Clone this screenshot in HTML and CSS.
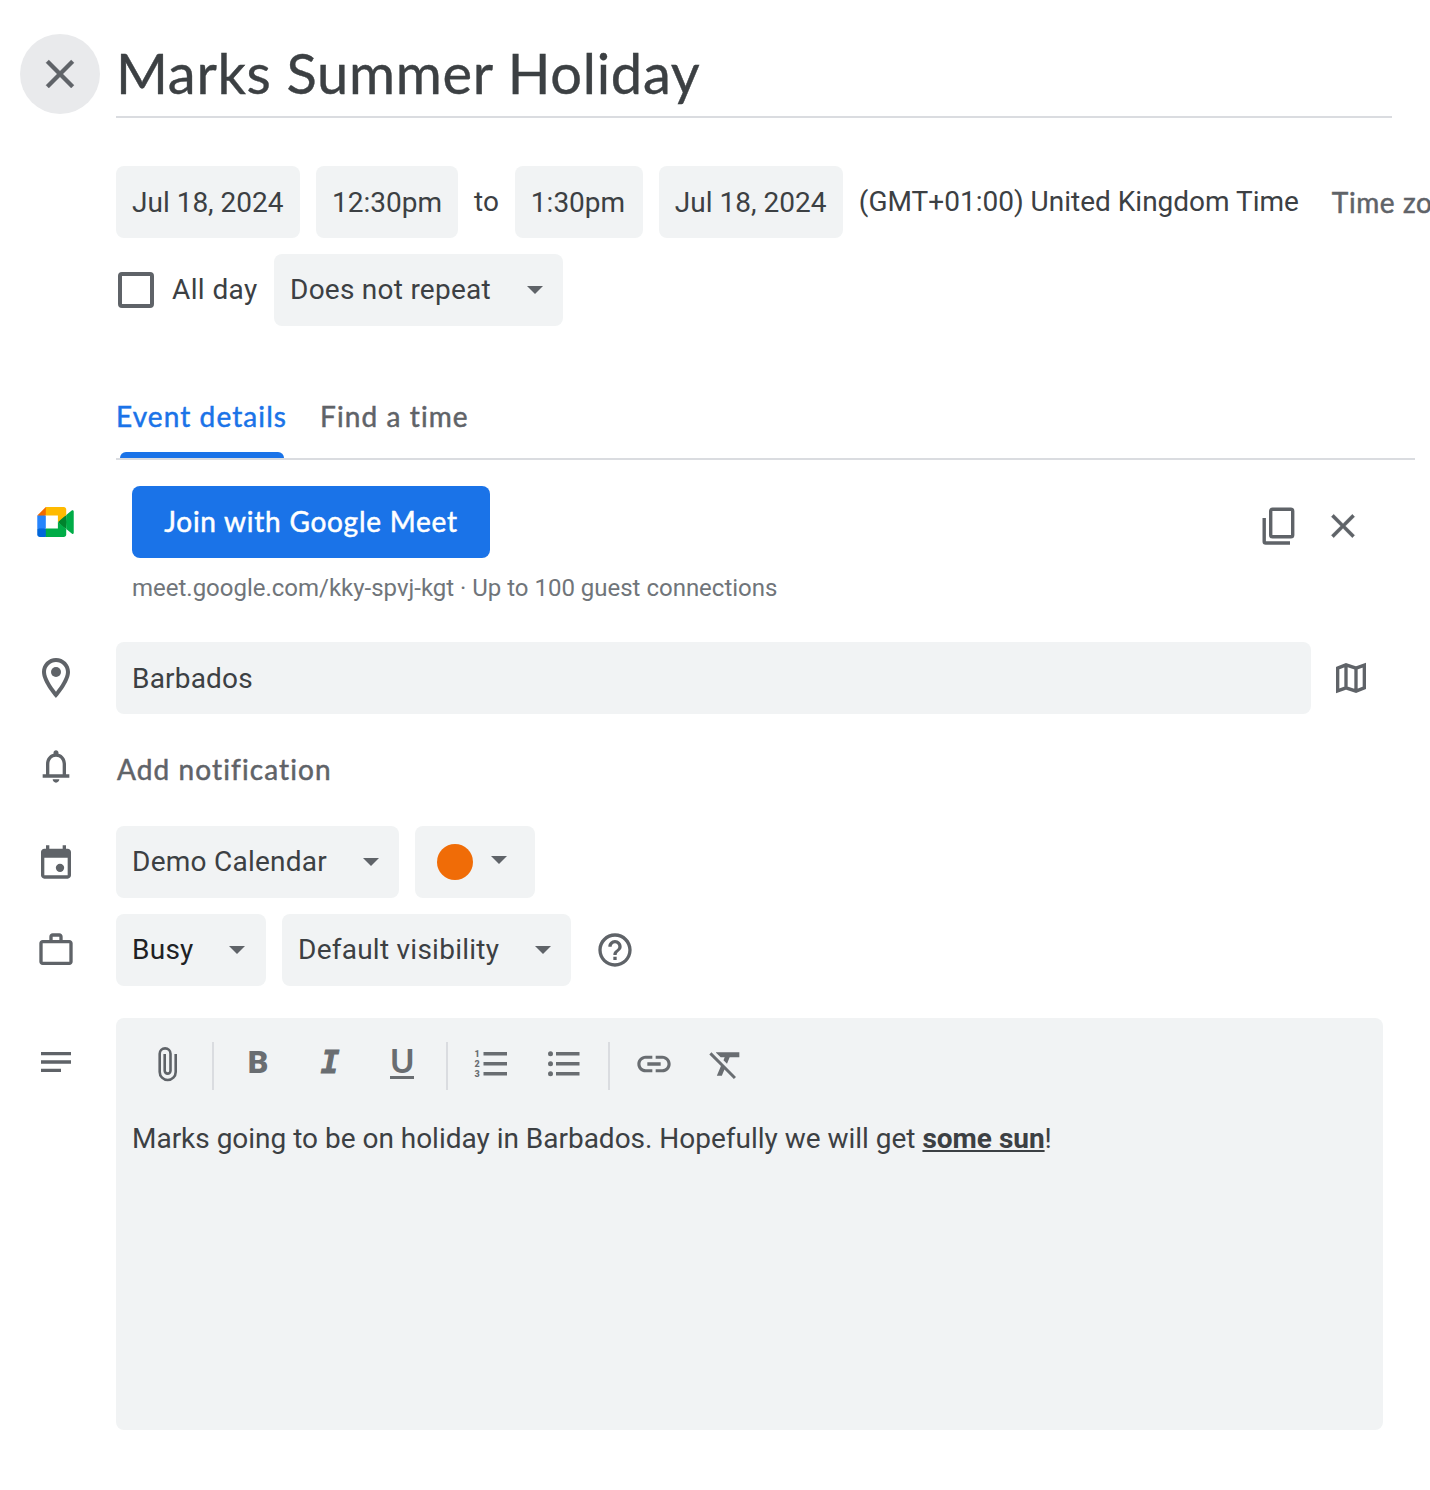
FILE: index.html
```
<!DOCTYPE html>
<html lang="en">
<head>
    <title>Marks Summer Holiday</title>
    <meta charset="utf-8">
    <meta name="viewport" content="width=device-width, initial-scale=1.0">

    <link rel="stylesheet" href="styles.css">
</head>
<body>
    <div class="event-page">
        <!-- Title -->
        <div class="header">
            <button class="close-btn" aria-label="Close">
                <svg width="48" height="48" viewBox="0 0 24 24"><path stroke="#5f6368" stroke-width="0.2" d="M19 6.41L17.59 5 12 10.59 6.41 5 5 6.41 10.59 12 5 17.59 6.41 19 12 13.41 17.59 19 19 17.59 13.41 12z"/></svg>
            </button>
            <h1 class="title">Marks Summer Holiday</h1>
        </div>

        <!-- Date and time -->
        <div class="date-row">
            <div class="chip chip-date">Jul 18, 2024</div>
            <div class="chip chip-start">12:30pm</div>
            <span class="to">to</span>
            <div class="chip chip-end">1:30pm</div>
            <div class="chip chip-date">Jul 18, 2024</div>
            <span class="zone">(GMT+01:00) United Kingdom Time</span>
            <span class="label zone-link">Time zone</span>
        </div>
        <div class="repeat-row">
            <span class="checkbox"></span>
            <span class="all-day">All day</span>
            <div class="chip select select-repeat">Does not repeat<i class="arrow"></i></div>
        </div>

        <!-- Tabs -->
        <div class="tabs">
            <div class="tab active"><span class="label">Event details</span></div>
            <div class="tab"><span class="label">Find a time</span></div>
        </div>

        <!-- Google Meet -->
        <div class="row meet-row">
            <div class="row-icon">
                <svg width="37" height="30" viewBox="0 0 87.5 72">
                    <path fill="#00832d" d="M49.5 36l8.53 9.75 11.47 7.33 2-17.02-2-16.64-11.69 6.44z"/>
                    <path fill="#0066da" d="M0 51.5V66c0 3.315 2.685 6 6 6h14.5l3-10.96-3-9.54-9.95-3z"/>
                    <path fill="#f06a00" d="M20.5 0L0 20.5l10.55 3 9.95-3 2.95-9.41z"/>
                    <path fill="#2684fc" d="M20.5 20.5H0v31h20.5z"/>
                    <path fill="#00ac47" d="M82.6 8.68L69.5 19.42v33.66l13.16 10.79c1.97 1.54 4.85.135 4.85-2.37V11c0-2.535-2.945-3.925-4.91-2.32zM49.5 36v15.5h-29V72h43c3.315 0 6-2.685 6-6V53.08z"/>
                    <path fill="#ffba00" d="M63.5 0h-43v20.5h29V36l20-16.57V6c0-3.315-2.685-6-6-6z"/>
                </svg>
            </div>
            <div class="meet-info">
                <button class="label join-btn">Join with Google Meet</button>
                <div class="meet-link">meet.google.com/kky-spvj-kgt · Up to 100 guest connections</div>
            </div>
            <div class="meet-actions">
                <svg width="34" height="38" viewBox="0 0 34 38"><g fill="none" stroke="#5f6368" stroke-width="3.4"><rect x="8.7" y="2.2" width="22" height="27.5" rx="1.8"/><path d="M2.2 11V34.5a1.5 1.5 0 0 0 1.500 1.500H28"/></g></svg>
                <svg width="40" height="40" viewBox="0 0 24 24"><path stroke="#5f6368" stroke-width="0.2" d="M19 6.41L17.59 5 12 10.59 6.41 5 5 6.41 10.59 12 5 17.59 6.41 19 12 13.41 17.59 19 19 17.59 13.41 12z"/></svg>
            </div>
        </div>

        <!-- Location -->
        <div class="row location-row">
            <div class="row-icon">
                <svg width="48" height="48" viewBox="0 0 24 24"><path d="M12 2C8.13 2 5 5.13 5 9c0 5.25 7 13 7 13s7-7.75 7-13c0-3.87-3.13-7-7-7zM7 9c0-2.76 2.24-5 5-5s5 2.24 5 5c0 2.88-2.88 7.19-5 9.88C9.92 16.21 7 11.85 7 9z"/><circle cx="12" cy="9" r="2.5"/></svg>
            </div>
            <div class="chip location">Barbados</div>
            <svg class="map-icon" width="40" height="40" viewBox="0 0 24 24"><path fill="none" stroke="#5f6368" stroke-width="2" d="M4 6.100L9 4.100l6 2 5-1.800V17.900l-5 2-6-2-5 1.800zM9 4.100v13.800M15 6.100v13.800"/></svg>
        </div>

        <!-- Notification -->
        <div class="row notify-row">
            <div class="row-icon">
                <svg width="40" height="40" viewBox="0 0 24 24"><path d="M18 17v-6c0-3.07-1.63-5.64-4.5-6.32V4c0-.83-.67-1.5-1.5-1.5s-1.5.67-1.5 1.5v.68C7.64 5.36 6 7.92 6 11v6H4v2h16v-2h-2zm-2 0H8v-6c0-2.48 1.51-4.5 4-4.5s4 2.02 4 4.5v6zM12 22c1.1 0 2-.9 2-2h-4c0 1.1.9 2 2 2z"/></svg>
            </div>
            <span class="label notify">Add notification</span>
        </div>

        <!-- Calendar -->
        <div class="row">
            <div class="row-icon">
                <svg width="40" height="40" viewBox="0 0 24 24"><path d="M19 4h-1V2h-2v2H8V2H6v2H5c-1.1 0-2 .9-2 2v14c0 1.1.9 2 2 2h14c1.1 0 2-.9 2-2V6c0-1.1-.9-2-2-2zm0 16H5V9.5h14V20z"/><circle cx="14.4" cy="15.5" r="2.5"/></svg>
            </div>
            <div class="chip select select-calendar">Demo Calendar<i class="arrow"></i></div>
            <div class="chip select-color"><span class="dot"></span><i class="arrow"></i></div>
        </div>

        <!-- Availability -->
        <div class="row busy-row">
            <div class="row-icon">
                <svg width="40" height="40" viewBox="0 0 24 24"><path d="M14 6V4h-4v2h4zM4 8v11h16V8H4zm16-2c1.11 0 2 .89 2 2v11c0 1.11-.89 2-2 2H4c-1.11 0-2-.89-2-2V8c0-1.11.89-2 2-2h4V4c0-1.11.89-2 2-2h4c1.11 0 2 .89 2 2v2h4z"/></svg>
            </div>
            <div class="chip select select-busy">Busy<i class="arrow"></i></div>
            <div class="chip select select-visibility">Default visibility<i class="arrow"></i></div>
            <svg class="help-icon" width="40" height="40" viewBox="0 0 24 24"><path d="M11 18h2v-2h-2v2zm1-16C6.48 2 2 6.48 2 12s4.48 10 10 10 10-4.48 10-10S17.52 2 12 2zm0 18c-4.41 0-8-3.59-8-8s3.59-8 8-8 8 3.59 8 8-3.59 8-8 8zm0-14c-2.21 0-4 1.79-4 4h2c0-1.1.9-2 2-2s2 .9 2 2c0 2-3 1.75-3 5h2c0-2.25 3-2.5 3-5 0-2.21-1.79-4-4-4z"/></svg>
        </div>

        <!-- Description -->
        <div class="row desc-row">
            <div class="row-icon">
                <svg width="40" height="40" viewBox="0 0 24 24"><path d="M3 18h12v-2H3v2zM3 6v2h18V6H3zm0 7h18v-2H3v2z"/></svg>
            </div>
            <div class="editor">
                <div class="toolbar">
                    <svg class="tool tool-attach" width="40" height="40" viewBox="0 0 40 40"><path fill="none" stroke="#5f6368" stroke-width="2.6" d="M28.7 10V28a8 8 0 0 1-16 0V9.8a5.4 5.4 0 0 1 10.8 0V26.7a2.9 2.9 0 0 1-5.8 0V10"/></svg>
                    <span class="divider"></span>
                    <span class="tool tool-bold">B</span>
                    <span class="tool tool-italic">I</span>
                    <span class="tool tool-underline">U</span>
                    <span class="divider"></span>
                    <svg class="tool tool-numbers" width="40" height="40" viewBox="0 0 40 40">
                        <path d="M12.500 8H36v3.400H12.500zM12.500 18H36v3.400H12.500zM12.500 28H36v3.400H12.500z"/>
                        <g class="numbers"><text x="3.500" y="13">1</text><text x="3.500" y="23">2</text><text x="3.500" y="33">3</text></g>
                    </svg>
                    <svg class="tool tool-bullets" width="40" height="40" viewBox="0 0 40 40">
                        <path d="M12 8H35.500v3.400H12zM12 18H35.500v3.400H12zM12 28H35.500v3.400H12z"/>
                        <circle cx="6.500" cy="9.700" r="2.500"/><circle cx="6.500" cy="19.700" r="2.500"/><circle cx="6.500" cy="29.700" r="2.500"/>
                    </svg>
                    <span class="divider"></span>
                    <svg class="tool tool-link" width="40" height="40" viewBox="0 0 24 24"><path d="M3.9 12c0-1.71 1.39-3.1 3.1-3.1h4V7H7c-2.76 0-5 2.24-5 5s2.24 5 5 5h4v-1.9H7c-1.71 0-3.1-1.39-3.1-3.1zM8 13h8v-2H8v2zm9-6h-4v1.9h4c1.71 0 3.1 1.39 3.1 3.1s-1.39 3.1-3.1 3.1h-4V17h4c2.76 0 5-2.24 5-5s-2.24-5-5-5z"/></svg>
                    <svg class="tool tool-clear" width="40" height="40" viewBox="0 0 24 24"><path d="M3.27 5L2 6.27l6.97 6.97L6.5 19h3l1.57-3.66L16.73 21 18 19.73 3.55 5.27 3.27 5zM6 5v.18L8.82 8h2.4l-.72 1.68 2.1 2.1L14.21 8H20V5H6z"/></svg>
                </div>
                <p class="desc">Marks going to be on holiday in Barbados. Hopefully we will get <b>some sun</b>!</p>
            </div>
        </div>
    </div>
</body>
</html>
```
FILE: styles.css
```
* {
    box-sizing: border-box;
}

body {
    margin: 0;
    background-color: #fff;
    color: #3c4043;
    font-family: Roboto, sans-serif;
    font-size: 28px;
    line-height: 40px;
    overflow: hidden;
}

svg {
    display: block;
    flex: none;
    fill: #5f6368;
}

button {
    border: 0;
    padding: 0;
    font: inherit;
}

.event-page {
    width: 1430px;
    height: 1490px;
    padding-top: 34px;
    overflow: hidden;
    white-space: nowrap;
}

.header {
    display: flex;
    padding-left: 20px;
}

.close-btn {
    display: flex;
    align-items: center;
    justify-content: center;
    width: 80px;
    height: 80px;
    border-radius: 50%;
    background-color: #e9eaec;
}

.title {
    width: 1276px;
    height: 84px;
    margin: 0 0 0 16px;
    border-bottom: 2px solid #dadce0;
    font-family: Lato, sans-serif;
    font-size: 56px;
    font-weight: 400;
    line-height: 77px;
    letter-spacing: 0.7px;
    -webkit-text-stroke: 0.4px;
}

.chip {
    display: flex;
    flex: none;
    align-items: center;
    height: 72px;
    padding: 0 16px;
    border-radius: 8px;
    background-color: #f1f3f4;
}

/* Date and time */
.date-row {
    display: flex;
    align-items: center;
    gap: 16px;
    margin: 48px 0 0 116px;
}

.date-row .chip {
    padding-top: 2px;
}

.chip-date {
    width: 184px;
}

.chip-start {
    width: 142px;
}

.chip-end {
    width: 128px;
}

.to {
    width: 25px;
}

.zone {
    width: 440px;
}

.repeat-row {
    display: flex;
    align-items: center;
    margin: 16px 0 0 118px;
}

.checkbox {
    width: 36px;
    height: 36px;
    border: 4px solid #5f6368;
    border-radius: 4px;
}

.all-day {
    width: 102px;
    margin-left: 18px;
    letter-spacing: 0.4px;
}

.select {
    justify-content: space-between;
    padding-right: 20px;
    letter-spacing: 0.25px;
}

.select-repeat {
    width: 289px;
}

.arrow {
    border: 8px solid transparent;
    border-top-color: #5f6368;
    border-bottom: 0;
}

/* Medium weight labels: tabs, buttons, links */
.label {
    font-family: Lato, sans-serif;
    color: #5f6368;
    letter-spacing: 1.1px;
    -webkit-text-stroke: 0.5px;
}

.zone-link {
    padding-left: 17px;
    letter-spacing: 0.6px;
}

/* Tabs */
.tabs {
    display: flex;
    gap: 32px;
    width: 1299px;
    height: 86px;
    margin: 48px 0 0 116px;
    border-bottom: 2px solid #dadce0;
}

.tab {
    display: flex;
    flex-direction: column;
    justify-content: space-between;
    padding-top: 22px;
}

.tab.active {
    width: 172px;
}

.tab.active .label {
    color: #1a73e8;
}

.tab.active::after {
    content: "";
    width: 164px;
    height: 6px;
    margin-left: 4px;
    border-radius: 6px 6px 0 0;
    background-color: #1a73e8;
}

/* Rows with a leading icon */
.row {
    display: flex;
    align-items: center;
}

.row-icon {
    display: flex;
    flex: none;
    justify-content: center;
    width: 112px;
    margin-right: 4px;
}

.meet-row {
    align-items: flex-start;
    height: 182px;
    padding-top: 26px;
}

.meet-row .row-icon {
    padding: 21px 1px 0 0;
}

.meet-info {
    width: 1146px;
    padding-left: 16px;
}

.join-btn {
    display: block;
    width: 358px;
    height: 72px;
    padding-bottom: 2px;
    border-radius: 8px;
    background-color: #1a73e8;
    color: #fff;
    letter-spacing: 0.75px;
}

.meet-link {
    margin-top: 10px;
    color: #70757a;
    font-size: 24px;
    letter-spacing: -0.01px;
}

.meet-actions {
    display: flex;
    align-items: center;
    gap: 27px;
    padding-top: 20px;
}

.location {
    width: 1195px;
    padding-top: 2px;
    letter-spacing: 0.2px;
}

.map-icon {
    margin-left: 20px;
}

.notify-row {
    height: 112px;
}

.notify-row .row-icon {
    padding-bottom: 8px;
}

.notify {
    padding: 0 0 3px 1px;
}

.select-calendar {
    width: 283px;
}

.select-color {
    gap: 18px;
    width: 120px;
    margin-left: 16px;
    padding-left: 22px;
}

.select-color .arrow {
    margin-bottom: 4px;
}

.dot {
    width: 36px;
    height: 36px;
    border-radius: 50%;
    background-color: #f06c07;
}

.busy-row {
    margin-top: 16px;
}

.select-busy {
    width: 150px;
    padding-right: 21px;
    color: #202124;
}

.select-visibility {
    width: 289px;
    margin-left: 16px;
}

.help-icon {
    margin-left: 24px;
}

/* Description editor */
.desc-row {
    align-items: flex-start;
    margin-top: 32px;
}

.desc-row .row-icon {
    padding-top: 24px;
}

.editor {
    width: 1267px;
    height: 412px;
    padding: 24px 16px;
    border-radius: 8px;
    background-color: #f1f3f4;
}

.toolbar {
    display: flex;
    align-items: flex-start;
    height: 48px;
}

.tool {
    width: 40px;
    height: 40px;
    color: #696d71;
    text-align: center;
}

.toolbar svg.tool {
    fill: #696d71;
}

.divider {
    width: 2px;
    height: 48px;
    background-color: #dadce0;
}

.tool-attach {
    margin: 2px 25px 0 15px;
}

.tool-bold {
    margin-left: 24px;
    font-size: 32px;
    font-weight: 900;
    line-height: 41px;
}

.tool-italic {
    margin-left: 32px;
    font-family: "DejaVu Sans Mono", monospace;
    font-size: 31px;
    font-style: italic;
    font-weight: 700;
    line-height: 41px;
    -webkit-text-stroke: 1px;
}

.tool-underline {
    width: 24px;
    height: 37px;
    margin: 0 32px 0 40px;
    border-bottom: 3px solid #696d71;
    font-family: Lato, sans-serif;
    font-size: 33px;
    font-weight: 700;
    line-height: 37px;
}

.tool-numbers {
    margin: 2px 0 0 23px;
}

.numbers {
    font: 900 9px Roboto, sans-serif;
}

.tool-bullets {
    margin: 2px 24px 0 33px;
}

.tool-link {
    margin: 2px 0 0 24px;
}

.tool-clear {
    margin: 2px 0 0 32px;
}

.desc {
    margin: 29px 0 0;
    letter-spacing: -0.015px;
}

.desc b {
    text-decoration: underline;
}
```
